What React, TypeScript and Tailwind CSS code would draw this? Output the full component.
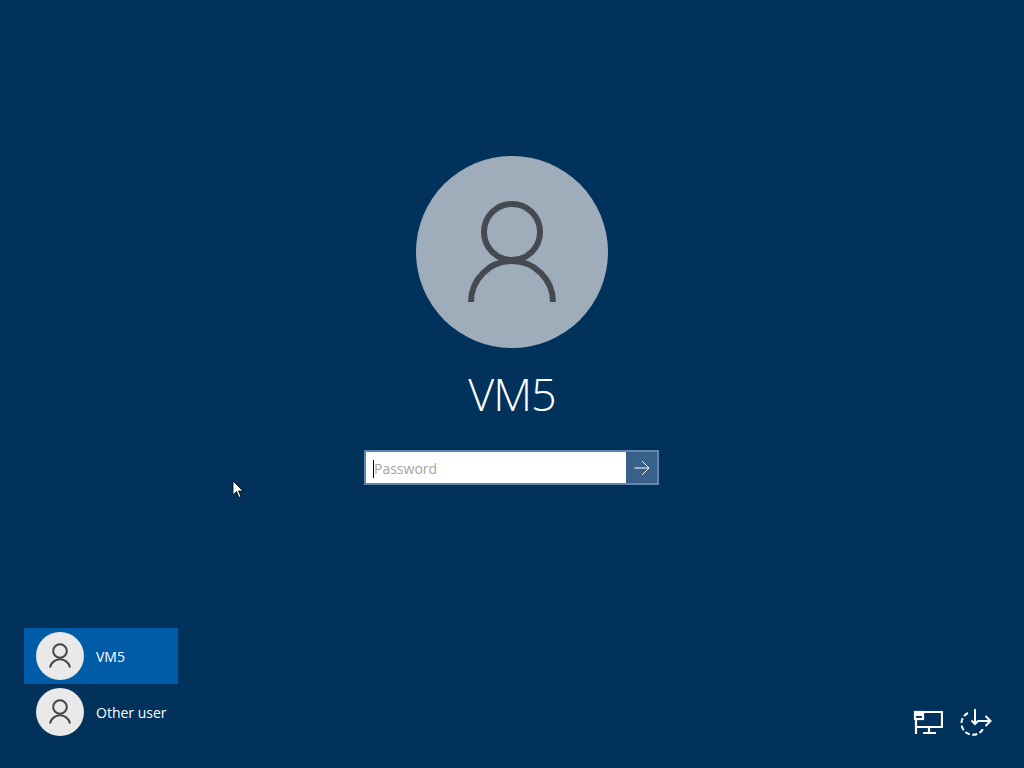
import React from 'react';

const UserRow: React.FC<{ name: string; active?: boolean }> = ({ name, active }) => (
  <div className={`flex items-center w-[154px] h-14 pl-3 gap-3 ${active ? 'bg-[#005ca6]' : ''}`}>
    <div className="w-12 h-12 shrink-0 rounded-full bg-[#e9e9e9]">
      <svg viewBox="0 0 48 48" fill="none" className="w-12 h-12">
        <circle cx="24" cy="19" r="6.8" stroke="#454545" strokeWidth="2" />
        <path d="M14 35.5 A10.2 10.2 0 0 1 34 35.5" stroke="#454545" strokeWidth="2" />
      </svg>
    </div>
    <span className="text-[14px] text-white">{name}</span>
  </div>
);

export default function App() {
  return (
    <div className="relative w-full h-screen overflow-hidden bg-[#00325c] flex flex-col font-['Open_Sans','Liberation_Sans',sans-serif]">
      <div className="flex flex-col items-center pt-[156px]">
        <div className="w-48 h-48 rounded-full bg-[#9fadbb]">
          <svg viewBox="0 0 192 192" fill="none" className="w-48 h-48">
            <circle cx="96" cy="76" r="28" stroke="#454a50" strokeWidth="6" />
            <path d="M55 146 A41 41 0 0 1 137 146" stroke="#454a50" strokeWidth="6" />
          </svg>
        </div>
        <div className="mt-[15px] text-[45px] leading-[62px] font-light tracking-[-1px] text-white">VM5</div>
        <div className="mt-[25px] mr-px w-[295px] h-[35px] flex border-2 border-[#6187ab]">
          <div className="flex-1 bg-white flex items-center pl-[7px] pt-[2px]">
            <span className="w-px h-[18px] bg-black" />
            <span className="text-[14px] text-[#a3a3a3]">Password</span>
          </div>
          <div className="w-[31px] bg-[#38608a] flex items-center justify-center">
            <svg viewBox="0 0 16 16" fill="none" className="w-4 h-4">
              <path d="M0.5 8 H15 M8 1 L15 8 L8 15" stroke="#ffffff" strokeWidth="1" />
            </svg>
          </div>
        </div>
      </div>

      <div className="mt-auto flex justify-between items-end pl-6 pr-[32px] pb-7">
        <div className="flex flex-col">
          <UserRow name="VM5" active />
          <UserRow name="Other user" />
        </div>
        <div className="flex items-center gap-[17px] pb-[4px]">
          <svg viewBox="0 0 30 26" fill="none" className="w-[30px] h-[26px]" stroke="#ffffff" strokeWidth="2.2">
            <path d="M9 3 H29 V18 H3 M3 10 V25 M16 18 V24 M10 24 H23" />
            <rect x="2" y="3" width="8" height="7" />
            <rect x="3" y="4" width="6" height="3" fill="#ffffff" strokeWidth="0" />
          </svg>
          <svg viewBox="0 0 32 28" fill="none" className="w-8 h-7" stroke="#ffffff" strokeWidth="2">
            <path d="M15 1 V16 M11.5 12.5 L15 16 L18.5 12.5" />
            <path d="M18 13 H30.5 M25.5 8 L30.5 13 L25.5 18" />
            <path d="M8 5 A11.5 11.5 0 1 0 23 21" strokeDasharray="5 2.5" />
          </svg>
        </div>
      </div>

      <svg viewBox="0 0 12 20" className="absolute left-[232px] top-[480px] w-3 h-5">
        <path d="M1 1 V15 L4.5 11.5 L7 17.5 L9 16.5 L6.5 11 H11 Z" fill="#ffffff" stroke="#000000" strokeWidth="0.8" />
      </svg>
    </div>
  );
}
